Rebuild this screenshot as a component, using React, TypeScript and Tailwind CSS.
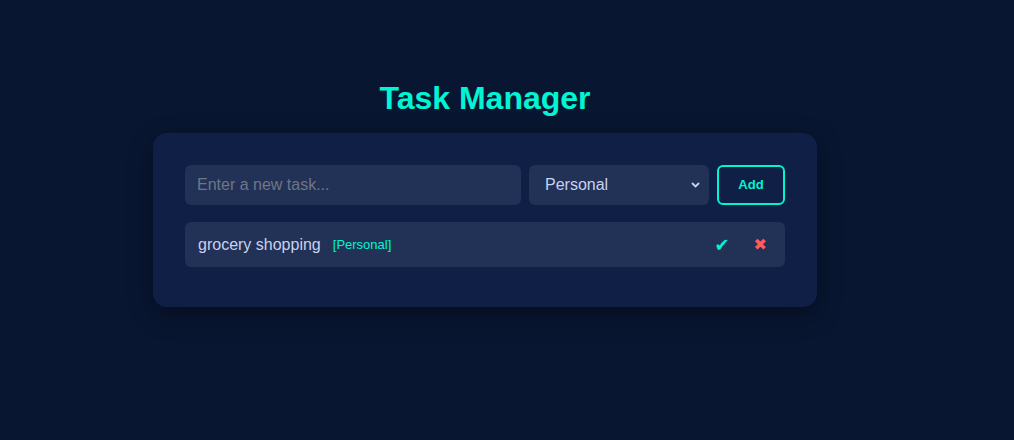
import { useState } from "react";

type Task = { id: number; text: string; category: string; done: boolean };

export default function App() {
  const [tasks, setTasks] = useState<Task[]>([
    { id: 1, text: "grocery shopping", category: "Personal", done: false },
  ]);
  const [text, setText] = useState("");
  const [category, setCategory] = useState("Personal");

  const addTask = () => {
    if (!text.trim()) return;
    setTasks([...tasks, { id: Date.now(), text: text.trim(), category, done: false }]);
    setText("");
  };

  return (
    <div className="min-h-[440px] w-full bg-[#081631] font-['Liberation_Sans',Arial,sans-serif]">
      <div className="ml-[153px] w-[664px] pt-[80px]">
        <h1 className="mb-[16px] text-center text-[32px] font-bold leading-[37px] text-[#00f5d4]">
          Task Manager
        </h1>
        <div className="rounded-[14px] bg-[#0f1f45] px-8 pb-10 pt-8 shadow-[0_8px_24px_rgba(0,0,0,0.35)]">
          <div className="flex gap-2">
            <input
              value={text}
              onChange={(e) => setText(e.target.value)}
              placeholder="Enter a new task..."
              className="h-10 min-w-0 flex-1 rounded-md bg-[#223256] px-3 text-base text-[#c9d1f0] outline-none placeholder:text-[#6f7688]"
            />
            <div className="relative w-[180px]">
              <select
                value={category}
                onChange={(e) => setCategory(e.target.value)}
                className="h-10 w-full appearance-none rounded-md bg-[#223256] pl-4 text-base text-[#c9d1f0] outline-none"
              >
                <option>Personal</option>
                <option>Work</option>
                <option>Shopping</option>
              </select>
              <svg
                className="pointer-events-none absolute right-[9px] top-[17px]"
                width="9"
                height="6"
                viewBox="0 0 9 6"
              >
                <path d="M1 1l3.5 3.5L8 1" stroke="#c9d1f0" strokeWidth="1.8" fill="none" />
              </svg>
            </div>
            <button
              onClick={addTask}
              className="h-10 w-[68px] rounded-md border-2 border-[#00f5d4] text-[13px] font-bold text-[#00f5d4]"
            >
              Add
            </button>
          </div>
          <ul className="mt-[17px] flex flex-col gap-2">
            {tasks.map((t) => (
              <li
                key={t.id}
                className="flex h-[45px] items-center rounded-md bg-[#223256] pl-[13px] pr-[18px]"
              >
                <span className={`text-base text-[#c9d1f0] ${t.done ? "line-through" : ""}`}>
                  {t.text}
                </span>
                <span className="ml-3 text-[13px] text-[#00f5d4]">[{t.category}]</span>
                <div className="ml-auto flex items-center gap-[24px]">
                  <button
                    onClick={() =>
                      setTasks(tasks.map((x) => (x.id === t.id ? { ...x, done: !x.done } : x)))
                    }
                    className="font-['DejaVu_Sans',sans-serif] text-[18px] text-[#00f5d4]"
                  >
                    ✔
                  </button>
                  <button
                    onClick={() => setTasks(tasks.filter((x) => x.id !== t.id))}
                    className="font-['DejaVu_Sans',sans-serif] text-[16px] text-[#ff5c5c]"
                  >
                    ✖
                  </button>
                </div>
              </li>
            ))}
          </ul>
        </div>
      </div>
    </div>
  );
}
